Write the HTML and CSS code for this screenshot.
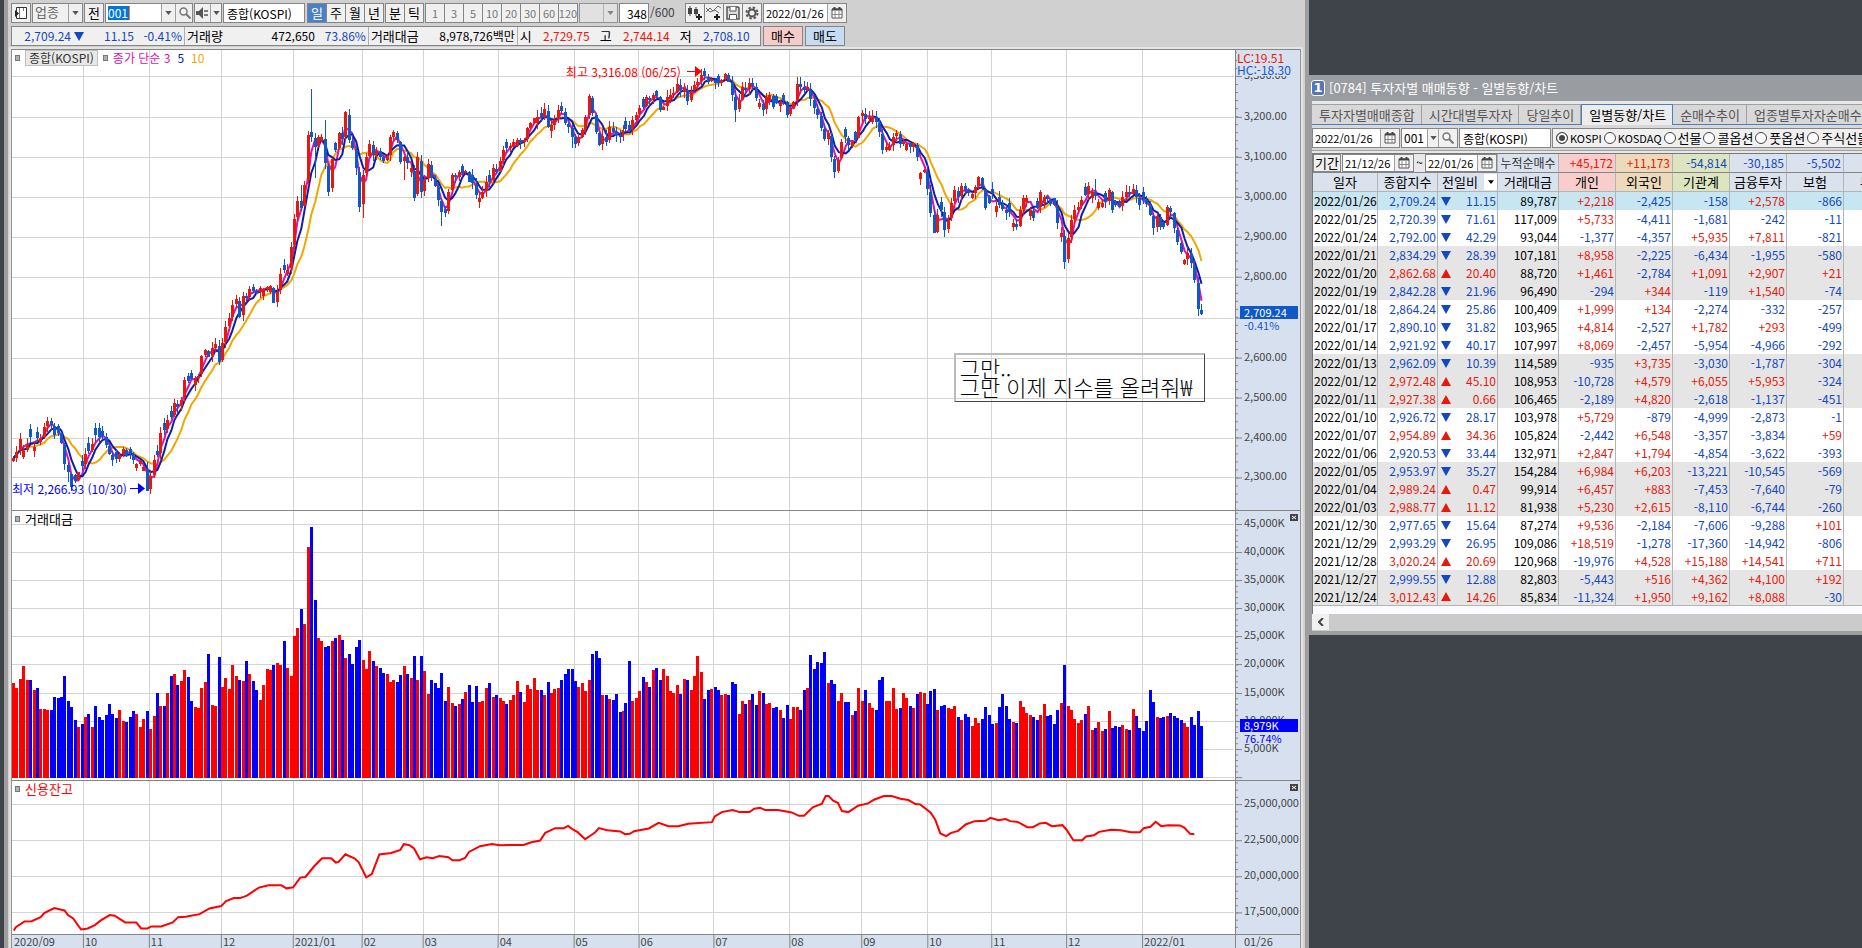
FILE: index.html
```html
<!DOCTYPE html>
<html lang="ko">
<head>
<meta charset="utf-8">
<title>종합(KOSPI)</title>
<link rel="stylesheet" href="styles.css">
</head>
<body>
<svg width="0" height="0" class="defs" aria-hidden="true">
  <symbol id="cal" viewBox="0 0 12 12"><path d="M1 2h10v9H1z" fill="#fff" stroke="#555"/><path d="M1 2.500h10M3.500 0v2M8.500 0v2" stroke="#444" stroke-width="2"/><path d="M4 4v7M8 4v7M1 7.500h10" stroke="#888"/></symbol>
  <symbol id="find" viewBox="0 0 12 12"><circle cx="4.500" cy="4.500" r="3.500" fill="#f4f4f4" stroke="#777" stroke-width="1.500"/><path d="M7 7l4.500 4.500" stroke="#777" stroke-width="2"/></symbol>
  <symbol id="down" viewBox="0 0 8 5"><path d="M0 0h8L4 5z" fill="#555"/></symbol>
</svg>
<div class="desktop">
  <main class="chart-window">
    <div class="toolbar">
      <button class="btn w20" aria-label="패널"><svg width="14" height="14"><path d="M2.500 1.500h10v11h-10z" fill="#fff" stroke="#333"/><path d="M5.500 2v10M9.500 2v3" stroke="#777"/><path d="M1 4l4 3.500L1 11z" fill="#222"/></svg></button>
      <div class="combo w51"><span class="muted">업종</span><button class="drop" aria-label="업종 선택"><svg><use href="#down"/></svg></button></div>
      <button class="btn w20">전</button>
      <div class="combo w88"><input class="code" aria-label="종목코드" value="001"><button class="drop" aria-label="코드 목록"><svg><use href="#down"/></svg></button><button class="drop find" aria-label="검색"><svg class="i12"><use href="#find"/></svg></button></div>
      <div class="combo w28"><button class="drop grow" aria-label="소리"><svg width="14" height="12"><path d="M0 4h3l4-4v12L3 8H0z" fill="#555"/><path d="M9 3v2M9 7v2M11 3v2M11 7v2" stroke="#555" stroke-width="1.500"/></svg></button><button class="drop slim" aria-label="소리 설정"><svg><use href="#down"/></svg></button></div>
      <input class="field w82" aria-label="종목명" value="종합(KOSPI)">
      <div class="group gap-l"><button class="on">일</button><button>주</button><button>월</button><button>년</button></div>
      <div class="group"><button>분</button><button>틱</button></div>
      <div class="group dim"><button>1</button><button>3</button><button>5</button><button>10</button><button>20</button><button>30</button><button>60</button><button>120</button></div>
      <div class="combo w39 off"><span></span><button class="drop" aria-label="주기"><svg><use href="#down"/></svg></button></div>
      <input class="field num w30" aria-label="봉 개수" value="348"><span class="total">/600</span>
      <div class="group tools">
        <button aria-label="차트 유형"><svg width="16" height="16"><path d="M1 3h4v6H1zM7 4h4v5H7z" fill="#444"/><path d="M3 1v10M9 2v9" stroke="#444"/><path d="M9 12h6M12 9v6" stroke="#222" stroke-width="2"/></svg></button>
        <button aria-label="지표 추가"><svg width="16" height="16"><path d="M0 7l4-4 3 3 5-5 3 2M0 3l4 4 5-2 4 3" fill="none" stroke="#666"/><path d="M8 12h6M11 9v6" stroke="#222" stroke-width="2"/></svg></button>
        <button aria-label="저장"><svg width="14" height="14"><path d="M1 1h11l1 1v11H1z" fill="#ddd" stroke="#555" stroke-width="1.500"/><path d="M4 1v4h6V1M3.500 13V8.500h7V13" fill="#fff" stroke="#555"/></svg></button>
        <button aria-label="설정"><svg width="14" height="14"><circle cx="7" cy="7" r="5.500" fill="none" stroke="#555" stroke-width="2" stroke-dasharray="2.400 1.920"/><circle cx="7" cy="7" r="3.500" fill="none" stroke="#555" stroke-width="2"/></svg></button>
      </div>
      <div class="combo w84"><input class="date" aria-label="날짜" value="2022/01/26"><button class="drop find" aria-label="달력"><svg class="i12"><use href="#cal"/></svg></button></div>
    </div>
    <div class="toolbar quote">
      <div class="strip">
        <span class="q1 blue">2,709.24</span><svg class="tri" width="10" height="9"><path d="M0 0h10L5 9z" fill="#1448be"/></svg><span class="q2 blue">11.15</span><span class="q2 blue">-0.41%</span>
        <span class="sep">거래량</span><span class="q3">472,650</span><span class="q4 blue">73.86%</span>
        <span class="sep">거래대금</span><span class="q5">8,978,726백만</span>
        <span class="sep">시</span><span class="q6 red">2,729.75</span><span class="cap">고</span><span class="q6 red">2,744.14</span><span class="cap">저</span><span class="q6 blue">2,708.10</span>
      </div>
      <button class="btn buy">매수</button><button class="btn sell">매도</button>
    </div>
    <section class="panes">
      <div class="pane price">
        <div class="plot"><svg id="price" viewBox="0 0 1224 461" preserveAspectRatio="none"></svg>
          <div class="legend"><i></i><b>종합(KOSPI)</b><i></i><span class="m3">종가 단순 3</span><span class="m5">5</span><span class="m10">10</span></div>
          <div class="mark hi">최고 3,316.08 (06/25)<svg width="15" height="11"><path d="M0 5.500h9" stroke="red"/><path d="M8 0l7 5.500L8 11z" fill="red"/></svg></div>
          <div class="mark lo">최저 2,266.93 (10/30)<svg width="15" height="11"><path d="M0 5.500h9" stroke="#00f"/><path d="M8 0l7 5.500L8 11z" fill="#00f"/></svg></div>
          <div class="note">그만..<br>그만 이제 지수를 올려줘₩</div>
        </div>
        <div class="axis"><svg id="priceAxis"></svg><div class="range"><span class="red">LC:19.51</span><span class="sky">HC:-18.30</span></div><div class="tag t1"><b>2,709.24</b><span>-0.41%</span></div></div>
      </div>
      <div class="pane volume">
        <div class="plot"><svg id="volume" viewBox="0 0 1224 268" preserveAspectRatio="none"></svg><div class="legend"><i></i><span class="name">거래대금</span></div></div>
        <div class="axis"><svg id="volumeAxis"></svg><div class="tag t2"><b>8,979K</b><span>76.74%</span></div><button class="x" aria-label="닫기"><svg width="8" height="7"><path d="M2 2l4 3M6 2L2 5" stroke="#fff"/></svg></button></div>
      </div>
      <div class="pane credit">
        <div class="plot"><svg id="credit" viewBox="0 0 1224 153" preserveAspectRatio="none"></svg><div class="legend"><i></i><span class="name pure">신용잔고</span></div></div>
        <div class="axis"><svg id="creditAxis"></svg><button class="x" aria-label="닫기"><svg width="8" height="7"><path d="M2 2l4 3M6 2L2 5" stroke="#fff"/></svg></button></div>
      </div>
      <div class="pane months"><div class="plot"><svg id="months"></svg></div><div class="axis"><span class="today">01/26</span></div></div>
    </section>
  </main>
  <aside class="side">
    <section class="trend-window">
      <header><em>1</em>[0784] 투자자별 매매동향 - 일별동향/차트</header>
      <nav class="tabs"><button>투자자별매매종합</button><button>시간대별투자자</button><button>당일추이</button><button class="on">일별동향/차트</button><button>순매수추이</button><button class="last">업종별투자자순매수</button></nav>
      <div class="filters">
        <div class="combo w88"><input class="date" aria-label="조회일" value="2022/01/26"><button class="drop find" aria-label="달력"><svg class="i12"><use href="#cal"/></svg></button></div>
        <div class="combo w57"><input class="plain" aria-label="업종코드" value="001"><button class="drop slim" aria-label="코드 목록"><svg><use href="#down"/></svg></button><button class="drop find" aria-label="검색"><svg class="i12"><use href="#find"/></svg></button></div>
        <input class="field w92" aria-label="업종명" value="종합(KOSPI)">
        <div class="radios"><label class="latin"><input type="radio" name="m" checked>KOSPI</label><label class="latin"><input type="radio" name="m">KOSDAQ</label><label><input type="radio" name="m">선물</label><label><input type="radio" name="m">콜옵션</label><label><input type="radio" name="m">풋옵션</label><label><input type="radio" name="m">주식선물</label></div>
      </div>
      <div class="tablebox">
        <table>
          <colgroup><col class="c66"><col class="c60"><col class="c60"><col class="c61"><col span="6"></colgroup>
          <thead>
            <tr><td colspan="3" class="period"><div><button class="btn">기간</button><div class="combo"><input class="span" aria-label="시작일" value="21/12/26"><button class="drop find" aria-label="달력"><svg class="i12"><use href="#cal"/></svg></button></div><span>~</span><div class="combo"><input class="span" aria-label="종료일" value="22/01/26"><button class="drop find" aria-label="달력"><svg class="i12"><use href="#cal"/></svg></button></div></div></td><th class="sum">누적순매수</th><td class="pink red">+45,172</td><td class="tan red">+11,173</td><td class="green blue">-54,814</td><td class="blue">-30,185</td><td class="blue">-5,502</td><td></td></tr>
            <tr><th>일자</th><th>종합지수</th><th class="diff"><div>전일비<button aria-label="정렬"><svg viewBox="0 0 8 5"><path d="M0 0h8L4 5z"/></svg></button></div></th><th>거래대금</th><th class="pink">개인</th><th class="tan">외국인</th><th class="green">기관계</th><th>금융투자</th><th>보험</th><th>투신</th></tr>
          </thead>
          <tbody id="rows"></tbody>
        </table>
      </div>
      <div class="scroll"><button aria-label="왼쪽으로"><svg width="6" height="8"><path d="M5 0L1 4l4 4" fill="none" stroke="#444" stroke-width="2"/></svg></button></div>
    </section>
  </aside>
</div>
<script src="chart.js"></script>
</body>
</html>
```
FILE: styles.css
```css
* { box-sizing: border-box; }
body { margin: 0; background: #3f434a; overflow: hidden; }
body, button, input { font-family: "Noto Sans CJK KR", sans-serif; font-size: 13px; line-height: 16px; color: #000; }
button, input { margin: 0; padding: 0; border: 0; border-radius: 0; min-width: 0; }
svg { display: block; flex: none; }
.defs { position: absolute; }
.red { color: #e8190c; }
.blue { color: #1448be; }
.sky { color: #1057c8; }
.desktop { display: grid; grid-template-columns: minmax(0, 1309fr) minmax(0, 553fr); height: 100vh; }
.chart-window { display: flex; flex-direction: column; margin-left: 4px; border-left: 4px solid #9e9e9e; border-right: 4px solid #9e9e9e; background: #d0d0d0; min-width: 0; }
.toolbar { display: flex; gap: 1px; height: 23px; padding: 3px 3px 0; white-space: nowrap; flex: none; }
.toolbar > * { flex: none; height: 20px; }
.quote { padding-top: 3px; height: 24px; gap: 2px; }
.chart-window > .panes { flex: 1; }
.btn, .combo, .field, .group { border: 1px solid #858585; background: #f0f0f0; }
.btn { display: flex; align-items: center; justify-content: center; }
.combo { display: flex; background: #fff; height: 20px; overflow: hidden; }
.combo > span, .combo > input { flex: 1; width: 0; padding-left: 2px; background: transparent; }
.combo > input { font-size: 12px; }
.combo > input.date, .combo > input.span { font-size: 11px; }
.combo > input.code { flex: none; width: 22px; margin: 2px 31px 2px 2px; padding: 0; background: #0078d7; color: #fff; border-right: 1px solid #f08020; }
.muted { color: #666; }
.combo .muted { background: #f0f0f0; }
.drop { width: 14px; display: flex; align-items: center; justify-content: center; background: #f0f0f0; border-left: 1px solid #a0a0a0; flex: none; }
.drop svg { width: 7px; height: 4px; }
.drop .i12 { width: 12px; height: 12px; }
.drop.find { width: 19px; }
.drop.slim { width: 11px; }
.drop.grow { flex: 1; border: 0; }
.drop.grow svg { width: 14px; height: 12px; }
.field { padding: 0 3px; background: #fff; height: 20px; font-size: 12px; }
.num { text-align: right; padding: 0 1px; }
.w20 { width: 20px; } .w28 { width: 28px; } .w30 { width: 30px; } .w39 { width: 39px; } .w51 { width: 51px; } .w57 { width: 57px; } .w82 { width: 82px; } .w84 { width: 84px; } .w88 { width: 88px; } .w92 { width: 92px; }
.off, .off .drop { background: #e6e6e6; opacity: .8; }
.total { width: 34px; line-height: 18px; color: #444; font-size: 12px; }
.group { display: flex; background: #858585; gap: 1px; }
.group button { width: 18px; background: #f0f0f0; display: flex; align-items: center; justify-content: center; }
.group .on { background: #4a80c8; color: #fff; }
.gap-l { margin-left: 1px; }
.group.dim button { color: #777; font-size: 11px; }
.strip { width: 750px; display: flex; align-items: center; border: 1px solid #858585; background: #f0f0f0; }
.strip span { text-align: right; font-size: 12px; }
.strip .sep, .strip .cap { font-size: 13px; }
.strip .q1 { width: 59px; }
.tri { margin: 0 3px; }
.strip .q2 { width: 47px; }
.strip .q2 + .q2 { width: 48px; }
.strip .sep { border-left: 1px solid #b0b0b0; padding-left: 2px; margin-left: 2px; line-height: 18px; text-align: left; white-space: nowrap; }
.strip .q3 { width: 92px; }
.strip .q4 { width: 51px; }
.strip .q5 { width: 96px; }
.strip .q6 { width: 58px; margin-right: 10px; }
.buy { background: #f5cdc8; width: 40px; }
.sell { background: #c5dcf3; width: 40px; }
.panes { display: flex; flex-direction: column; margin: 2px 4px 0 3px; border: solid #929292; border-width: 0 1px; min-height: 0; outline: 2px solid #e4e4e4; }
.pane { display: flex; border-top: 1px solid #858585; flex-basis: 0; min-height: 0; }
.price { flex-grow: 462; }
.volume { flex-grow: 269; }
.credit { flex-grow: 154; }
.months { flex: 0 0 14px; overflow: hidden; }
.plot { flex: 1; position: relative; background: #fff; min-width: 0; overflow: hidden; }
.plot > svg { width: 100%; height: 100%; }
.months .plot { background: #d6e0ef; }
.axis { width: 65px; flex: none; border-left: 1px solid #858585; background: #d6e0ef; position: relative; overflow: hidden; font-size: 11px; }
.axis > svg { width: 100%; height: 100%; }
.axis text, .months text { fill: #444; font-size: 11px; }
.today { display: block; padding-left: 8px; line-height: 13px; color: #444; }
.legend { position: absolute; top: 0; left: 3px; display: flex; align-items: center; gap: 5px; font-size: 12px; }
.legend .name { font-size: 13px; }
.legend i { width: 5px; height: 6px; border: 1px solid #777; background: #b0b0b0; }
.legend b { font-weight: 400; border: 1px solid #c0c0c0; background: #e8e8e8; color: #333; padding: 0 3px; line-height: 14px; }
.legend .m3 { color: #dd10b0; } .legend .m5 { color: #0a20a8; padding: 0 2px; } .legend .m10 { color: #f0a800; }
.pure { color: #f00; }
.mark { position: absolute; display: flex; align-items: center; gap: 6px; white-space: nowrap; font-size: 12px; }
.hi { color: #f00; right: 43.600%; top: 3%; }
.lo { color: #00f; left: 0; top: 93.500%; gap: 3px; }
.note { position: absolute; left: 77%; top: 65.700%; width: 251px; padding: 3px 4px 5px; border: 1px solid #444; border-top: 2px solid #bbb; border-left: 2px solid #bbb; font-size: 22px; line-height: 19px; font-weight: 300; white-space: nowrap; }
.range { position: absolute; top: 1px; left: 1px; display: flex; flex-direction: column; background: #d6e0ef; font-size: 12px; line-height: 12px; padding: 1px 6px 0 0; }
.tag { position: absolute; left: 4px; right: 2px; display: flex; flex-direction: column; line-height: 12px; }
.tag b { font-weight: 400; color: #fff; padding-left: 4px; line-height: 13px; }
.tag span { padding-left: 4px; }
.t1 { top: 55.500%; color: #1057c8; } .t1 b { background: #1057c8; }
.t2 { top: 77.600%; color: #00f; } .t2 b { background: #00f; }
.x { position: absolute; top: 3px; right: 2px; width: 8px; height: 7px; background: #444; }
.side { overflow: hidden; padding-top: 75px; }
.trend-window { background: #e8e8e8; border-left: 3px solid #9e9e9e; border-bottom: 4px solid #9e9e9e; width: 600px; }
.trend-window header { background: #999ca0; color: #fff; height: 26px; display: flex; align-items: center; gap: 4px; margin-left: -1px; }
.trend-window em { font: 700 13px/14px "DejaVu Sans", sans-serif; width: 14px; height: 16px; border: 1px solid #fff; border-radius: 3px; background: #5577b5; text-align: center; }
.tabs { display: flex; margin-top: 3px; border-bottom: 1px solid #4a80c0; background: #d8d8d8; white-space: nowrap; }
.tabs button { height: 20px; padding: 0 6px 0 7px; background: #d8d8d8; color: #555; border: 1px solid #a0a0a0; border-width: 1px 1px 0 0; flex: none; }
.tabs .on { background: #ececec; color: #000; border: 1px solid #4a80c0; border-bottom: 0; margin-bottom: -1px; height: 21px; }
.filters { display: flex; gap: 1px; padding: 3px 0 2px; background: #d8d8d8; border-bottom: 1px solid #a0a0a0; }
.filters > * { flex: none; }
.radios { display: flex; align-items: center; gap: 2px; border: 1px solid #858585; background: #f0f0f0; padding-left: 3px; white-space: nowrap; }
.radios label { display: flex; align-items: center; gap: 2px; }
.radios .latin { font-size: 11px; }
.radios input { width: 12px; height: 12px; appearance: none; border: 1px solid #444; border-radius: 50%; background: #fff; }
.radios input:checked { background: #444; border: 1px solid #444; box-shadow: inset 0 0 0 2px #fff; }
.tablebox { margin-top: 2px; border-top: 1px solid #777; border-left: 1px solid #777; background: #fafbff; padding-bottom: 8px; }
table { table-layout: fixed; border-collapse: separate; border-spacing: 0; width: 588px; }
col { width: 57px; } .c66 { width: 65px; } .c60 { width: 60px; } .c61 { width: 61px; }
td, th { height: 18px; padding: 0 2px; border-right: 1px solid #b4b4b4; text-align: right; line-height: 16px; white-space: nowrap; font-weight: 400; }
td { font-size: 12px; }
th { text-align: center; padding: 0; }
thead td, thead th { height: 19px; background: #dae2ee; border-bottom: 1px solid #b4b4b4; }
thead tr:first-child > * { border-bottom-color: #858585; }
thead .period { padding: 0; background: #e8e8e8; }
.period > div { display: flex; gap: 1px; text-align: center; }
.period .btn { width: 28px; height: 18px; }
.period .combo { width: 72px; height: 18px; }
.period > div > span { flex: 1; }
thead .pink { background: #f7cecb; } thead .tan { background: #ecdabb; } thead .green { background: #dce5c0; }
.sum { color: #333; font-size: 12px; }
.diff > div { display: flex; padding-left: 4px; justify-content: space-between; }
.diff button { width: 13px; background: #fff; display: flex; align-items: center; justify-content: center; }
.diff svg { width: 6px; height: 4px; }
tbody td { padding: 0 1px; }
tbody tr { background: #fff; }
tbody tr:nth-child(6n+4), tbody tr:nth-child(6n+5), tbody tr:nth-child(6n+6) { background: #e5e5e5; }
tbody tr:first-child { background: #c8e6f1; }
tbody tr:last-child td { border-bottom: 1px solid #b4b4b4; }
tbody td:first-child { text-align: center; }
.chg > div { display: flex; align-items: center; justify-content: space-between; padding-left: 2px; }
.scroll { background: #cbcbcb; height: 17px; }
.scroll button { width: 17px; height: 16px; background: #f0f0f0; display: flex; align-items: center; justify-content: center; }
```
FILE: chart.js
```js
const WIDTH = 1224, STEP = 3.427;
const MONTHS = [[71,'10'],[137,'11'],[209,'12'],[281,'2021/01'],[350,'02'],[411,'03'],[486,'04'],[562,'05'],[627,'06'],[702,'07'],[778,'08'],[850,'09'],[916,'10'],[980,'11'],[1055,'12'],[1131,'2022/01']];

// R = up day, B = down day; number = top of the bar in thirds of a pixel
const VOLUME = `R552 R567 R540 R501 R543 B543 R573 B567 R630 R630 R633 B633 B594 B597 B594 B531 B606 B624 B663 R684
B675 R654 B645 R684 B621 B654 B663 B648 B615 B645 B657 R633 R666 B669 B654 B636 R645 R684 R660 B636
R690 R651 B582 R621 B621 R582 B531 R525 B558 R546 R513 B534 B606 R624 R627 R567 R549 B465 R618 R621
B474 R564 R537 R570 R498 R531 B543 R546 B486 R525 B546 B573 R603 R558 R510 R513 B498 R492 R498 B426
R507 R531 R411 R387 B330 R375 R144 B84 B303 R417 R426 B444 B441 R426 B417 R408 B423 R477 B465 B495
B444 B423 R483 R510 R456 B486 R501 B507 B522 R525 R549 R543 B549 B528 R501 B525 R537 B471 R543 B471
R516 R585 B543 B552 B567 B522 B606 R564 R612 B621 R615 B600 R579 B558 B609 B561 R609 R606 R567 B552
R594 B588 R597 R606 B615 R603 R588 R546 B579 R609 R558 R570 R537 R573 B573 R588 B549 R582 R570 R567
B543 B525 B510 B510 B546 R564 R552 R576 R543 B465 B456 B477 R588 B588 R600 B603 B585 B639 R636 B612
B486 R606 R597 R576 B534 R549 B564 R513 B507 B543 R510 R531 R576 R582 R558 B585 R540 B543 R573 R531
R471 R519 B600 B573 R570 B564 B573 R588 R585 B588 B549 B555 R645 R606 B615 R603 B585 B618 R576 B582
R615 R612 B627 B624 R633 B657 B618 R660 R624 R624 B633 B573 R567 B468 B510 B489 B492 B459 R552 B543
B555 R606 R582 B609 B609 R648 B636 R567 R606 B573 R612 R627 B633 B543 B534 R606 R606 R567 R630 B627
R582 R597 B621 R627 B585 R579 R582 B615 B576 B570 R633 B621 B618 R627 R630 R621 B654 R663 B645 B654
R681 R657 R672 B660 B624 B648 B675 R672 B624 B585 B621 B660 R669 B672 R606 R624 R642 R648 B654 B663
R648 R615 B651 B648 B675 B633 R612 B498 R621 R633 R660 R672 R663 B645 R621 R693 B687 R669 R696 B690
R636 B687 B681 B684 R678 R690 B693 R630 B651 B687 B696 B666 B573 B609 R654 B657 B654 R651 B642 B651
B657 B663 R672 R684 B654 B678 B636 B681`.split(/\s+/);

const CLOSE = [1255,1237,1198,1232,1212,1190,1222,1195,1195,1160,1142,1155,1185,1180,1208,1275,1300,1345,1325,1300,
1280,1242,1232,1212,1185,1190,1188,1215,1242,1262,1258,1245,1228,1247,1240,1262,1275,1265,1283,1355,
1312,1262,1245,1178,1170,1140,1130,1090,1100,1080,1020,1022,1018,1015,1008,948,930,950,925,912,
965,910,860,835,795,778,830,768,775,748,752,758,745,748,742,738,788,755,703,690,
690,622,538,482,505,435,285,290,320,292,290,368,455,358,330,278,298,215,300,325,
385,500,405,352,312,345,332,350,362,350,292,275,300,365,350,370,385,475,352,455,
420,372,415,437,480,515,520,455,405,412,395,400,392,425,430,465,475,455,425,425,
385,395,362,330,325,318,305,300,308,300,265,250,235,230,232,208,260,255,240,210,
212,250,260,290,312,292,270,230,168,218,275,315,288,305,262,275,285,292,270,268,
270,240,225,203,200,172,180,165,168,210,200,170,165,158,132,150,145,182,152,135,
125,105,108,125,118,130,128,120,102,125,165,210,180,142,150,128,138,175,190,210,
170,165,200,190,185,182,225,205,185,132,140,150,142,178,205,225,265,298,280,352,
395,360,305,290,315,305,300,230,220,238,230,228,245,275,330,320,318,290,280,312,
305,312,322,310,352,398,390,448,518,580,525,510,570,540,488,450,470,438,450,460,
462,440,412,440,505,490,460,498,495,508,520,515,550,562,510,475,475,510,535,505,
455,470,478,492,495,550,580,665,595,540,510,500,480,465,437,455,468,485,488,485,
450,510,495,500,472,455,462,448,470,495,480,492,525,565,528,560,560,502,515,565,
605,635,660,640,670,720,808,822];

const HIGHS = {84:435, 87:148, 91:240, 97:212, 168:163, 201:88, 209:100, 230:112, 248:210, 316:417, 88:280};
const LOWS = {39:1355, 16:1330, 88:413, 92:467, 101:515, 102:535, 114:420, 125:557, 136:505, 163:325, 211:245, 240:413, 265:435, 269:580, 272:590, 307:686, 308:668, 347:825, 346:828};

const CREDIT = [[35,1290],[40,1280],[62,1263],[80,1262],[103,1250],[112,1238],[137,1223],[163,1230],[172,1244],[185,1254],[205,1287],[222,1284],[240,1274],[255,1260],[278,1244],[290,1246],[317,1266],[345,1266],[357,1284],[373,1284],[383,1278],[408,1278],[437,1266],[451,1250],[470,1249],[505,1241],[530,1224],[560,1217],[572,1202],[592,1193],[608,1193],[625,1186],[655,1162],[680,1155],[712,1155],[725,1164],[742,1161],[760,1132],[773,1130],[795,1098],[815,1074],[838,1074],[850,1087],[857,1085],[874,1062],[898,1075],[908,1086],[927,1131],[941,1121],[960,1063],[990,1058],[1013,1049],[1022,1032],[1035,1034],[1048,1045],[1063,1077],[1080,1071],[1095,1074],[1112,1067],[1135,1071],[1145,1080],[1163,1080],[1177,1073],[1187,1055],[1215,1038],[1245,1031],[1265,1035],[1325,1034],[1345,1026],[1367,1021],[1380,998],[1405,984],[1427,984],[1438,977],[1450,988],[1462,996],[1481,1017],[1495,1006],[1506,997],[1516,984],[1537,990],[1570,994],[1582,1002],[1594,1001],[1605,993],[1642,985],[1667,968],[1692,978],[1717,978],[1742,971],[1802,966],[1809,949],[1827,936],[1854,930],[1872,936],[1897,936],[1909,926],[1924,923],[1937,930],[1969,930],[2004,937],[2022,947],[2035,947],[2057,922],[2080,911],[2090,888],[2097,888],[2109,902],[2121,909],[2131,933],[2147,936],[2172,917],[2197,910],[2212,899],[2237,888],[2257,888],[2279,896],[2299,900],[2317,912],[2329,913],[2355,937],[2367,958],[2380,1000],[2395,1008],[2407,998],[2425,992],[2444,973],[2467,963],[2494,962],[2507,953],[2527,960],[2545,957],[2557,963],[2577,966],[2600,981],[2614,981],[2632,970],[2647,968],[2662,978],[2689,975],[2699,988],[2717,1020],[2739,1020],[2749,1009],[2769,1005],[2782,995],[2812,989],[2837,990],[2862,996],[2885,996],[2895,984],[2912,980],[2925,965],[2939,978],[2957,975],[2987,976],[2999,984],[3012,1001],[3023,1002]];

const byId = id => document.getElementById(id);
const barX = i => Math.round(i * STEP);
const rect = (x, y, w, h, fill) => `<rect x="${x}" y="${y}" width="${w}" height="${h}" fill="${fill}"/>`;

function grid(rows, height) {
  return rows.map(y => rect(0, y, WIDTH - 1, 1, '#d4d4d4')).join('') +
    MONTHS.map(m => rect(m[0], 0, 1, height, '#d4d4d4')).join('');
}

function average(n) {
  const pts = [];
  CLOSE.forEach((_, i) => {
    const part = CLOSE.slice(Math.max(0, i - n + 1), i + 1);
    const y = part.reduce((a, b) => a + b, 0) / part.length;
    pts.push(`${barX(i) + 1.5},${(y / 3 - 10).toFixed(1)}`);
  });
  return pts.join(' ');
}

function drawPrice() {
  const rows = Array.from({length: 11}, (_, k) => Math.round(26.4 + k * 40.2));
  const under = [], line = (n, c) => `<polyline points="${average(n)}" fill="none" stroke="${c}" stroke-width="2"/>`;
  CLOSE.forEach((close, i) => {
    const up = VOLUME[i][0] === 'R', prev = i ? CLOSE[i - 1] : close + 12;
    const gap = close - prev;
    let open = prev + gap * 0.1;
    if (up && open < close + 5) open = close + 12 + (i * 7) % 14;
    if (!up && open > close - 5) open = close - 12 - (i * 5) % 14;
    const top = Math.min(open, close), bottom = Math.max(open, close);
    const high = HIGHS[i] || top - 2 - (i * 37) % 19;
    const low = LOWS[i] || bottom + 2 + (i * 53) % 19;
    const color = up ? '#e8190c' : '#1057c8', px = v => Math.round(v / 3 - 10);
    under.push(rect(barX(i) + 1, px(high), 1, px(low) - px(high), color));
    under.push(rect(barX(i), px(top), 3, Math.max(1, px(bottom) - px(top)), color));
  });
  byId('price').innerHTML = `<g shape-rendering="crispEdges">${grid(rows, 461)}</g>` + line(10, '#f0a800') + line(3, '#dd10b0') + line(5, '#0a20a8') +
    `<g shape-rendering="crispEdges">${under.join('')}</g>`;
  axis('priceAxis', rows, 461, k => (3300 - k * 100).toLocaleString('en') + '.00', 40.2 / 5, 9);
}

function drawVolume() {
  const rows = [13, 41, 69, 97, 125, 153, 182, 210, 238, 266];
  byId('volume').innerHTML = `<g shape-rendering="crispEdges">${grid(rows, 268)}` + VOLUME.map((v, i) => {
    const y = Math.round(+v.slice(1) / 3) - 12;
    return rect(barX(i), y, 3, 267 - y, v[0] === 'R' ? '#f00' : '#00f');
  }).join('') + '</g>';
  axis('volumeAxis', rows, 268, k => k < 9 ? (45 - k * 5) + ',000K' : '', 28.1 / 5);
}

function drawCredit() {
  const rows = [23, 59, 95, 131];
  const pts = CREDIT.map(p => `${(p[0] / 2.529 - 12).toFixed(1)},${(p[1] / 3 - 281).toFixed(1)}`).join(' ');
  byId('credit').innerHTML = `<g shape-rendering="crispEdges">${grid(rows, 153)}</g><polyline points="${pts}" fill="none" stroke="#f00" stroke-width="2"/>`;
  axis('creditAxis', rows, 153, k => (25000000 - k * 2500000).toLocaleString('en'), 36 / 5);
}

function axis(id, rows, height, label, minor, count = rows.length) {
  const pct = y => (y / height * 100).toFixed(2) + '%';
  let out = '';
  for (let y = rows[0] % minor; y < height; y += minor) out += `<rect x="0" y="${pct(y)}" width="2" height="1" fill="#858585"/>`;
  rows.forEach((y, k) => {
    out += `<rect x="0" y="${pct(y)}" width="6" height="1" fill="#858585"/>`;
    if (id !== 'priceAxis' || k !== 6) out += `<text x="8" y="${pct(y)}" dy="3">${label(k)}</text>`;
  });
  byId(id).innerHTML = out;
}

function drawMonths() {
  byId('months').innerHTML = '<text x="2" y="11">2020/09</text>' + MONTHS.map(([x, t]) => {
    const p = (x / WIDTH * 100).toFixed(2) + '%';
    return `<rect x="${p}" y="0" width="1" height="14" fill="#858585"/><text x="${p}" dx="2" y="11">${t}</text>`;
  }).join('');
}

const ROWS = `2022/01/26 2,709.24 -11.15 89,787 +2,218 -2,425 -158 +2,578 -866
2022/01/25 2,720.39 -71.61 117,009 +5,733 -4,411 -1,681 -242 -11
2022/01/24 2,792.00 -42.29 93,044 -1,377 -4,357 +5,935 +7,811 -821
2022/01/21 2,834.29 -28.39 107,181 +8,958 -2,225 -6,434 -1,955 -580
2022/01/20 2,862.68 +20.40 88,720 +1,461 -2,784 +1,091 +2,907 +21
2022/01/19 2,842.28 -21.96 96,490 -294 +344 -119 +1,540 -74
2022/01/18 2,864.24 -25.86 100,409 +1,999 +134 -2,274 -332 -257
2022/01/17 2,890.10 -31.82 103,965 +4,814 -2,527 +1,782 +293 -499
2022/01/14 2,921.92 -40.17 107,997 +8,069 -2,457 -5,954 -4,966 -292
2022/01/13 2,962.09 -10.39 114,589 -935 +3,735 -3,030 -1,787 -304
2022/01/12 2,972.48 +45.10 108,953 -10,728 +4,579 +6,055 +5,953 -324
2022/01/11 2,927.38 +0.66 106,465 -2,189 +4,820 -2,618 -1,137 -451
2022/01/10 2,926.72 -28.17 103,978 +5,729 -879 -4,999 -2,873 -1
2022/01/07 2,954.89 +34.36 105,824 -2,442 +6,548 -3,357 -3,834 +59
2022/01/06 2,920.53 -33.44 132,971 +2,847 +1,794 -4,854 -3,622 -393
2022/01/05 2,953.97 -35.27 154,284 +6,984 +6,203 -13,221 -10,545 -569
2022/01/04 2,989.24 +0.47 99,914 +6,457 +883 -7,453 -7,640 -79
2022/01/03 2,988.77 +11.12 81,938 +5,230 +2,615 -8,110 -6,744 -260
2021/12/30 2,977.65 -15.64 87,274 +9,536 -2,184 -7,606 -9,288 +101
2021/12/29 2,993.29 -26.95 109,086 +18,519 -1,278 -17,360 -14,942 -806
2021/12/28 3,020.24 +20.69 120,968 -19,976 +4,528 +15,188 +14,541 +711
2021/12/27 2,999.55 -12.88 82,803 -5,443 +516 +4,362 +4,100 +192
2021/12/24 3,012.43 +14.26 85,834 -11,324 +1,950 +9,162 +8,088 -30`;

function drawRows() {
  byId('rows').innerHTML = ROWS.split('\n').map(row => {
    const [date, index, change, amount, ...flows] = row.split(' ');
    const up = change[0] === '+', tone = up ? 'red' : 'blue';
    const arrow = `<svg width="10" height="9"><path d="${up ? 'M0 9h10L5 0z' : 'M0 0h10L5 9z'}" fill="${up ? '#e8190c' : '#1448be'}"/></svg>`;
    return `<tr><td>${date}</td><td class="${tone}">${index}</td><td class="chg ${tone}"><div>${arrow}${change.slice(1)}</div></td><td>${amount}</td>` +
      flows.map(f => `<td class="${f[0] === '+' ? 'red' : 'blue'}">${f}</td>`).join('') + '<td></td></tr>';
  }).join('');
}

drawPrice();
drawVolume();
drawCredit();
drawMonths();
drawRows();
```
